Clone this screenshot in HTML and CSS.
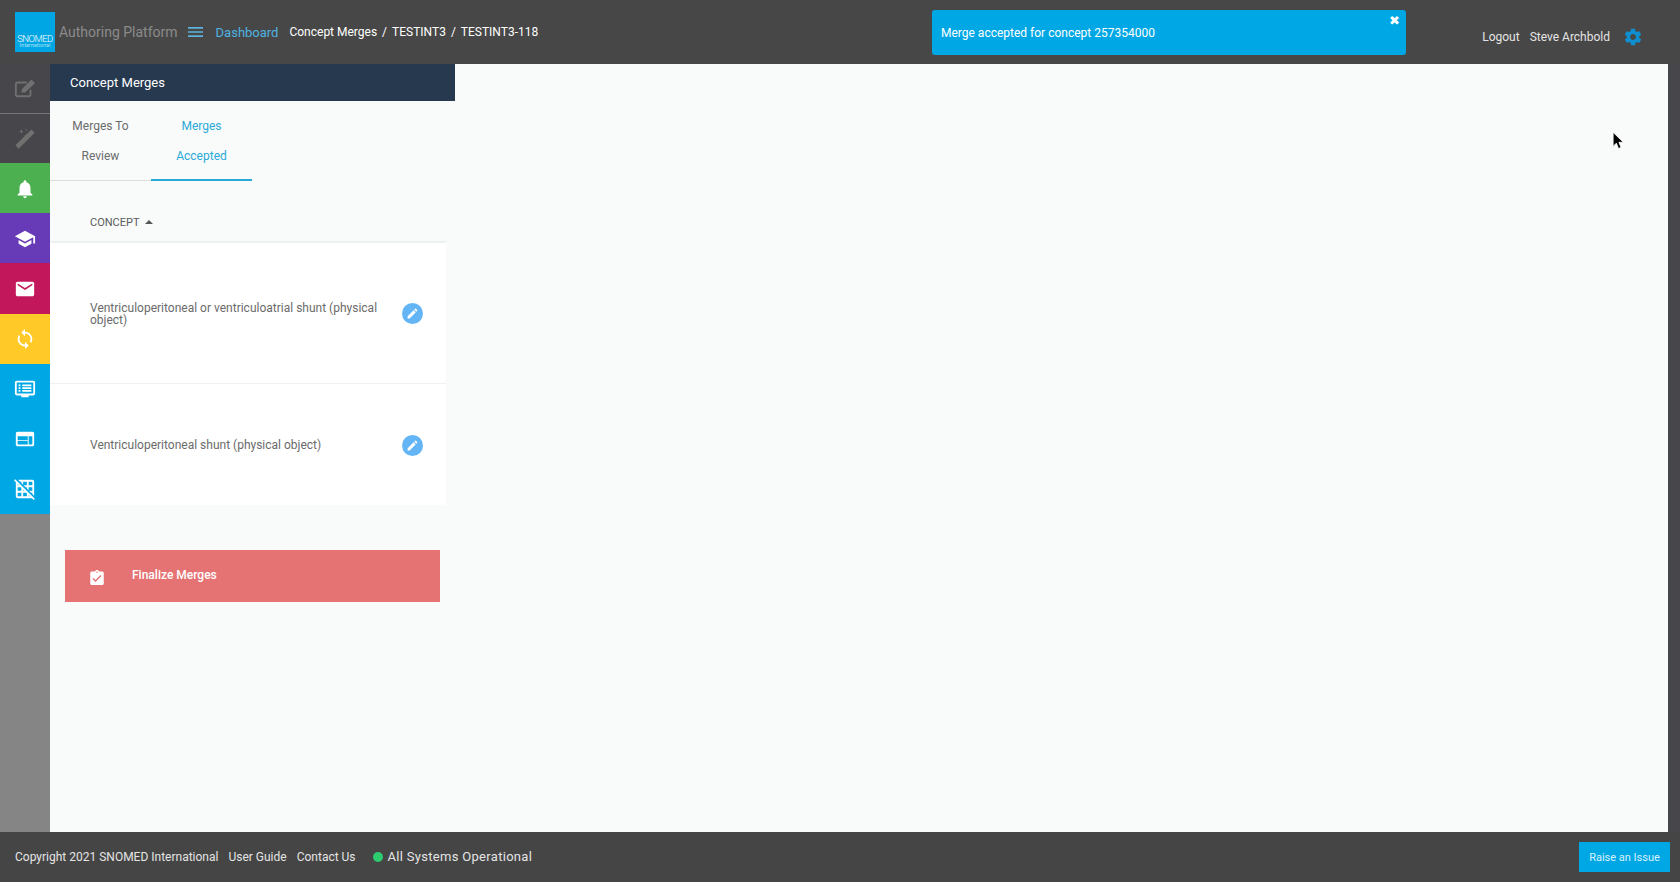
FILE: index.html
```html
<!DOCTYPE html>
<html lang="en">
<head>
  <meta charset="UTF-8">
  <title>Authoring Platform</title>
  <link rel="stylesheet" href="styles.css">
</head>
<body>

<!-- Top bar -->
<header class="topbar">
  <div class="logo">
    <span class="logo-name">SNOMED</span>
    <span class="logo-sub">International</span>
  </div>
  <span class="brand">Authoring Platform</span>
  <svg class="hamburger" viewBox="3 6 18 12"><path d="M3 18h18v-2H3v2zm0-5h18v-2H3v2zm0-7v2h18V6H3z"/></svg>
  <a class="crumb-home">Dashboard</a>
  <nav class="crumbs">
    <span>Concept Merges</span><span class="sep">/</span><span>TESTINT3</span><span class="sep">/</span><span>TESTINT3-118</span>
  </nav>
  <div class="user">
    <span>Logout</span>
    <span>Steve Archbold</span>
    <svg class="gear" viewBox="0 0 24 24"><path d="M19.43 12.98c.04-.32.07-.64.07-.98s-.03-.66-.07-.98l2.11-1.65c.19-.15.24-.42.12-.64l-2-3.46c-.12-.22-.39-.3-.61-.22l-2.49 1c-.52-.4-1.08-.73-1.69-.98l-.38-2.65C14.46 2.18 14.25 2 14 2h-4c-.25 0-.46.18-.49.42l-.38 2.65c-.61.25-1.17.59-1.69.98l-2.49-1c-.23-.09-.49 0-.61.22l-2 3.46c-.13.22-.07.49.12.64l2.11 1.65c-.04.32-.07.65-.07.98s.03.66.07.98l-2.11 1.65c-.19.15-.24.42-.12.64l2 3.46c.12.22.39.3.61.22l2.49-1c.52.4 1.08.73 1.69.98l.38 2.65c.03.24.24.42.49.42h4c.25 0 .46-.18.49-.42l.38-2.65c.61-.25 1.17-.59 1.69-.98l2.49 1c.23.09.49 0 .61-.22l2-3.46c.12-.22.07-.49-.12-.64l-2.11-1.65zM12 15.5c-1.93 0-3.5-1.57-3.5-3.5s1.57-3.5 3.5-3.5 3.5 1.57 3.5 3.5-1.57 3.5-3.5 3.5z"/></svg>
  </div>
</header>

<!-- Toast -->
<div class="toast">
  Merge accepted for concept 257354000
  <span class="toast-close">&#10006;</span>
</div>

<div class="middle">

  <!-- Icon rail -->
  <aside class="rail">
    <div class="rail-item dark first">
      <svg viewBox="0 0 24 24" class="muted-icon"><path fill="none" stroke="currentColor" stroke-width="2" stroke-linejoin="round" d="M18 14v5a2 2 0 0 1-2 2H4a2 2 0 0 1-2-2V8a2 2 0 0 1 2-2h10"/><path d="M8 17l.8-4L19 2.800 23 6.800 12 17z"/></svg>
    </div>
    <div class="rail-item dark second">
      <svg viewBox="0 0 24 24" class="muted-icon"><path d="M19 2.600l3.600 3.600L5.100 23.600 1.500 20z"/><path d="M8 2.500l.7 1.800 1.800.7-1.800.7L8 7.500l-.7-1.800L5.500 5l1.800-.7zM13.500 1.500l.4 1.100 1.100.4-1.100.4-.4 1.100-.4-1.100L12 3l1.100-.4zM12.500 7.500l.4 1.100 1.100.4-1.100.4-.4 1.100-.4-1.100-1.100-.4 1.100-.4z"/></svg>
    </div>
    <div class="rail-item green">
      <svg viewBox="0 0 24 24"><path d="M12 22c1.100 0 2-.9 2-2h-4c0 1.100.89 2 2 2zm6-6v-5c0-3.070-1.640-5.640-4.500-6.320V4c0-.83-.67-1.500-1.500-1.500s-1.500.67-1.500 1.500v.68C7.630 5.360 6 7.920 6 11v5l-2 2v1h16v-1l-2-2z"/></svg>
    </div>
    <div class="rail-item purple">
      <svg viewBox="0 0 24 24"><path d="M5 13.180v4L12 21l7-3.820v-4L12 17l-7-3.820zM12 3L1 9l11 6 9-4.910V17h2V9L12 3z"/></svg>
    </div>
    <div class="rail-item pink">
      <svg viewBox="0 0 24 24"><path d="M20 4H4c-1.100 0-1.990.9-1.990 2L2 18c0 1.100.9 2 2 2h16c1.100 0 2-.9 2-2V6c0-1.100-.9-2-2-2zm0 4l-8 5-8-5V6l8 5 8-5v2z"/></svg>
    </div>
    <div class="rail-item yellow">
      <svg viewBox="0 0 24 24"><path d="M12 4V1L8 5l4 4V6c3.310 0 6 2.690 6 6 0 1.010-.25 1.970-.7 2.800l1.460 1.460C19.540 15.030 20 13.570 20 12c0-4.420-3.580-8-8-8zm0 14c-3.310 0-6-2.690-6-6 0-1.010.25-1.970.7-2.800L5.240 7.740C4.460 8.970 4 10.430 4 12c0 4.420 3.580 8 8 8v3l4-4-4-4v3z"/></svg>
    </div>
    <div class="rail-item blue">
      <svg viewBox="0 0 24 24"><path d="M21 3H3c-1.100 0-2 .9-2 2v12c0 1.100.9 2 2 2h5v2h8v-2h5c1.100 0 2-.9 2-2V5c0-1.100-.9-2-2-2zm0 14H3V5h18v12zM5 7h2v2H5zm4 0h10v2H9zM5 10h2v2H5zm4 0h10v2H9zm-4 3h2v2H5zm4 0h10v2H9z"/></svg>
    </div>
    <div class="rail-item blue">
      <svg viewBox="0 0 24 24"><path d="M20 4H4c-1.100 0-1.990.9-1.990 2L2 18c0 1.100.9 2 2 2h16c1.100 0 2-.9 2-2V6c0-1.100-.9-2-2-2zm-5 14H4v-4h11v4zm0-5H4V9h11v4zm5 5h-4V9h4v9z"/></svg>
    </div>
    <div class="rail-item blue">
      <svg viewBox="0 0 24 24"><path d="M8 4v1.450l2 2V4h4v4h-3.450l2 2H14v1.450l2 2V10h4v4h-3.450l2 2H20v1.450l2 2V4c0-1.100-.9-2-2-2H4.550l2 2H8zm8 0h4v4h-4V4zM1.270 1.270L0 2.550l2 2V20c0 1.100.9 2 2 2h15.460l2 2 1.270-1.270L1.270 1.270zM10 12.550L11.450 14H10v-1.450zm-6-6L5.450 8H4V6.550zM8 20H4v-4h4v4zm0-6H4v-4h3.450l.55.55V14zm6 6h-4v-4h3.450l.55.55V20zm2 0v-1.450L17.450 20H16z"/></svg>
    </div>
  </aside>

  <!-- Merges panel -->
  <main class="content">
    <section class="panel">
      <h2 class="panel-title">Concept Merges</h2>

      <div class="tabs">
        <div class="tab">Merges To<br>Review</div>
        <div class="tab active">Merges<br>Accepted</div>
      </div>

      <div class="table">
        <div class="table-head">CONCEPT <span class="sort"></span></div>
        <div class="row first-row">
          <span class="row-text">Ventriculoperitoneal or ventriculoatrial shunt (physical object)</span>
          <span class="edit-btn"><svg viewBox="0 0 24 24"><path d="M3 17.250V21h3.750L17.810 9.940l-3.750-3.750L3 17.250zM20.710 7.040c.39-.39.39-1.020 0-1.410l-2.340-2.340c-.39-.39-1.020-.39-1.410 0l-1.830 1.830 3.750 3.750 1.830-1.830z"/></svg></span>
        </div>
        <div class="row second-row">
          <span class="row-text">Ventriculoperitoneal shunt (physical object)</span>
          <span class="edit-btn"><svg viewBox="0 0 24 24"><path d="M3 17.250V21h3.750L17.810 9.940l-3.750-3.750L3 17.250zM20.710 7.040c.39-.39.39-1.020 0-1.410l-2.340-2.340c-.39-.39-1.020-.39-1.410 0l-1.830 1.830 3.750 3.750 1.830-1.830z"/></svg></span>
        </div>
      </div>

      <div class="finalize">
        <svg viewBox="3 1 18 20"><path d="M19 3h-4.180C14.400 1.840 13.300 1 12 1c-1.300 0-2.400.84-2.820 2H5c-1.100 0-2 .9-2 2v14c0 1.100.9 2 2 2h14c1.100 0 2-.9 2-2V5c0-1.100-.9-2-2-2zm-7 0c.55 0 1 .45 1 1s-.45 1-1 1-1-.45-1-1 .45-1 1-1zm-2 14l-4-4 1.410-1.410L10 14.170l6.590-6.590L18 9l-8 8z"/></svg>
        <span>Finalize Merges</span>
      </div>
    </section>
  </main>

  <div class="scrollbar"></div>
</div>

<!-- Footer -->
<footer class="footer">
  <span>Copyright 2021 SNOMED International</span>
  <span>User Guide</span>
  <span>Contact Us</span>
  <span class="status"><i class="dot"></i>All Systems Operational</span>
  <button class="issue-btn">Raise an Issue</button>
</footer>

<!-- Mouse pointer caught in the screenshot -->
<svg class="cursor" viewBox="0 0 12 18"><path d="M1 1v13l3-3 2 5 2.400-1-2-4.800H10.500z" stroke="#fff" stroke-width=".8"/></svg>

</body>
</html>
```

FILE: styles.css
```css
* {
  box-sizing: border-box;
}

body {
  margin: 0;
  height: 882px;
  display: flex;
  flex-direction: column;
  overflow: hidden;
  font-family: Roboto, sans-serif;
  font-size: 12px;
  background-color: #454545;
  color: #fff;
}

/* Top bar */
.topbar {
  height: 64px;
  flex: none;
  display: flex;
  align-items: center;
  padding-left: 15px;
  background-color: #474747;
}

.logo {
  width: 40px;
  height: 40px;
  display: flex;
  flex-direction: column;
  justify-content: flex-end;
  align-items: center;
  padding-bottom: 3px;
  background-color: #00a5e3;
  line-height: 7px;
  overflow: hidden;
}

.logo-name {
  font-size: 9.500px;
  font-weight: 300;
  letter-spacing: -0.5px;
}

.logo-sub {
  font-size: 5.500px;
  color: #a5e3fa;
}

.brand {
  margin-left: 4px;
  font-size: 14px;
  color: #8b8b8b;
}

.hamburger {
  width: 15px;
  height: 10px;
  margin-left: 10px;
  fill: #5db3dc;
}

.crumb-home {
  margin-left: 13px;
  font-size: 13px;
  color: #4fb3e0;
}

.crumbs {
  margin-left: 11px;
  display: flex;
  gap: 5px;
  margin-top: -1px;
}

.user {
  margin-left: auto;
  margin-right: 37px;
  margin-top: 9px;
  display: flex;
  align-items: center;
  gap: 10px;
  color: #e4e4e4;
}

.gear {
  width: 20px;
  height: 20px;
  margin-left: 3px;
  fill: #0f8fd0;
}

/* Toast */
.toast {
  position: absolute;
  left: 932px;
  top: 10px;
  width: 474px;
  height: 45px;
  padding: 15px 9px;
  border-radius: 3px;
  background-color: #00a7e5;
  line-height: 16px;
}

.toast-close {
  position: absolute;
  top: 4px;
  right: 6px;
  font-size: 13px;
  line-height: 14px;
}

/* Middle */
.middle {
  flex: 1;
  display: flex;
  min-height: 0;
}

.rail {
  width: 50px;
  flex: none;
  background-color: #858585;
}

.rail-item {
  height: 50px;
  display: flex;
  align-items: center;
  justify-content: center;
}

.rail-item svg {
  width: 22px;
  height: 22px;
  fill: #fff;
}

.rail-item .muted-icon {
  fill: #707070;
  color: #707070;
}

.dark {
  padding-bottom: 2px;
  background-color: #46464b;
}

.first {
  border-bottom: 1px solid #777;
}

.second {
  height: 49px;
}

.green {
  padding-top: 2px;
  background-color: #4caf50;
}

.purple {
  padding-top: 2px;
  background-color: #673ab7;
}

.pink {
  height: 51px;
  padding-top: 1px;
  background-color: #c2185b;
}

.yellow {
  background-color: #ffca28;
}

.blue {
  background-color: #00a7e5;
}

.content {
  flex: 1;
  background-color: #f9fbfb;
}

.panel {
  width: 405px;
}

.panel-title {
  height: 37px;
  margin: 0;
  padding-left: 20px;
  font-size: 13px;
  font-weight: 400;
  line-height: 37px;
  background-color: #26394f;
}

.tabs {
  display: flex;
  width: 202px;
  height: 80px;
  border-bottom: 1px solid #ddd;
  padding-top: 10px;
}

.tab {
  width: 101px;
  text-align: center;
  line-height: 30px;
  color: #6b6b6b;
}

.tab.active {
  color: #2aa9d8;
  border-bottom: 2px solid #2aa9d8;
  margin-bottom: -1px;
}

.table {
  width: 396px;
  padding-top: 19px;
  color: #6b6b6b;
}

.table-head {
  height: 43px;
  padding: 16px 0 0 40px;
  font-size: 11px;
  line-height: 14px;
  color: #5a5a5a;
  border-bottom: 2px solid #eef1f1;
}

.sort {
  display: inline-block;
  margin-left: 3px;
  vertical-align: 2px;
  border-left: 4px solid transparent;
  border-right: 4px solid transparent;
  border-bottom: 4px solid #555;
}

.row {
  display: flex;
  align-items: center;
  padding: 0 23px 0 40px;
  background-color: #fff;
  line-height: 12px;
}

.first-row {
  height: 141px;
  border-bottom: 1px solid #eef1f1;
}

.second-row {
  height: 121px;
}

.row-text {
  flex: 1;
  padding: 2px 20px 0 0;
}

.second-row .row-text {
  padding-top: 0;
}

.second-row .edit-btn {
  margin-top: 2px;
}

.edit-btn {
  width: 21px;
  height: 21px;
  flex: none;
  display: flex;
  align-items: center;
  justify-content: center;
  border-radius: 50%;
  background-color: #64b5f6;
}

.edit-btn svg {
  width: 13px;
  height: 13px;
  fill: #fff;
}

.finalize {
  width: 375px;
  height: 52px;
  margin: 45px 0 0 15px;
  display: flex;
  align-items: center;
  padding: 0 0 3px 25px;
  background-color: #e57373;
}

.finalize svg {
  width: 14px;
  height: 15px;
  margin-top: 5px;
  fill: #fff;
}

.finalize span {
  margin-left: 28px;
  font-weight: 500;
}

.scrollbar {
  width: 12px;
  flex: none;
  background-color: #46464b;
}

/* Footer */
.footer {
  height: 50px;
  flex: none;
  display: flex;
  align-items: center;
  padding-left: 15px;
  gap: 10px;
  color: #e4e4e4;
  background-color: #454545;
}

.status {
  display: flex;
  align-items: center;
  margin: -1px 0 0 7px;
  font-size: 13px;
  letter-spacing: 0.3px;
}

.dot {
  width: 10px;
  height: 10px;
  margin-right: 5px;
  border-radius: 50%;
  background-color: #2ecc71;
}

.issue-btn {
  width: 91px;
  height: 30px;
  margin-left: auto;
  margin-right: 10px;
  border: none;
  padding: 0;
  font-family: Roboto, sans-serif;
  font-size: 11px;
  color: #d8f2fc;
  background-color: #00a7e5;
}

.cursor {
  position: absolute;
  left: 1612px;
  top: 131px;
  width: 13px;
  height: 20px;
  fill: #000;
}
```
